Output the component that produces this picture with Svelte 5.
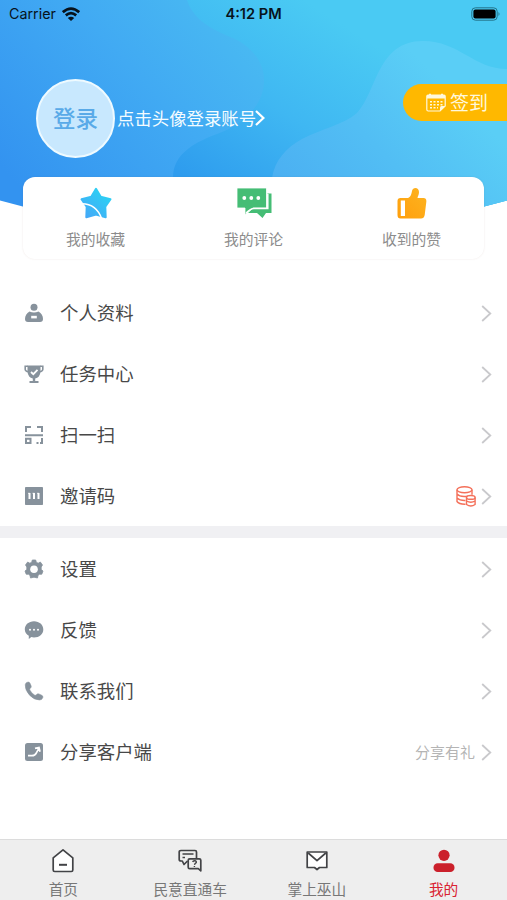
<script>
  const stats = [
    { id: 'star', label: '我的收藏' },
    { id: 'comment', label: '我的评论' },
    { id: 'like', label: '收到的赞' },
  ];

  const groups = [
    [
      { id: 'profile', label: '个人资料' },
      { id: 'task', label: '任务中心' },
      { id: 'scan', label: '扫一扫' },
      { id: 'invite', label: '邀请码', coins: true },
    ],
    [
      { id: 'settings', label: '设置' },
      { id: 'feedback', label: '反馈' },
      { id: 'contact', label: '联系我们' },
      { id: 'share', label: '分享客户端', note: '分享有礼' },
    ],
  ];

  const tabs = [
    { id: 'home', label: '首页' },
    { id: 'opinion', label: '民意直通车' },
    { id: 'wushan', label: '掌上巫山' },
    { id: 'mine', label: '我的' },
  ];

  let activeTab = $state('mine');
</script>

<div class="page">
  <header class="header">
    <svg class="header-bg" width="507" height="240" viewBox="0 0 507 240">
      <defs>
        <linearGradient id="sky" gradientUnits="userSpaceOnUse" x1="50" y1="220" x2="290" y2="0">
          <stop offset="0" stop-color="#3393f0" />
          <stop offset="0.5" stop-color="#41aaf3" />
          <stop offset="1" stop-color="#4dc1f1" />
        </linearGradient>
        <linearGradient id="deep" gradientUnits="userSpaceOnUse" x1="205" y1="190" x2="320" y2="10">
          <stop offset="0" stop-color="#2e9cee" />
          <stop offset="0.5" stop-color="#3fb7f2" />
          <stop offset="1" stop-color="#4acaf3" />
        </linearGradient>
        <linearGradient id="wave" gradientUnits="userSpaceOnUse" x1="290" y1="190" x2="420" y2="60">
          <stop offset="0" stop-color="#4bb0f2" />
          <stop offset="0.5" stop-color="#52bef4" />
          <stop offset="1" stop-color="#5acef6" />
        </linearGradient>
        <clipPath id="header-shape">
          <path d="M0 0H507V200.5Q380 236 253 236T0 200.5Z" />
        </clipPath>
      </defs>
      <g clip-path="url(#header-shape)">
        <path fill="url(#sky)" d="M0 0H507V240H0Z" />
        <path fill="url(#deep)" d="M187 0C194 22 216 31 235 39C253 48 264 63 264 80C264 104 246 122 222 132C195 142 173 153 173 178V240H507V0Z" />
        <path fill="url(#wave)" d="M272 178C275 160 286 148 302 139C321 129 343 125 357 113C377 92 377 41 423 41C459 41 474 69 507 69V240H272Z" />
      </g>
    </svg>

    <div class="status-bar">
      <div class="carrier">
        <span>Carrier</span>
        <svg width="18" height="14" viewBox="0 0 18 14" fill="none" stroke="#07131c" stroke-width="2.7">
          <path d="M.8 5.2Q9-2 17.2 5.2" /><path d="M3.8 8.4Q9 4 14.2 8.4" />
          <path d="M5.8 10.9Q9 8.4 12.2 10.9L9 14Z" fill="#07131c" stroke="none" />
        </svg>
      </div>
      <span class="time">4:12 PM</span>
      <svg class="battery" width="30" height="14" viewBox="0 0 30 14">
        <rect x="0.8" y="0.8" width="25.4" height="12.4" rx="3.6" fill="none" stroke="#23738a" stroke-width="1" />
        <rect x="2.4" y="2.4" width="22.2" height="9.2" rx="2" fill="#000" />
        <path d="M27.5 5Q29.5 7 27.5 9Z" fill="#23738a" />
      </svg>
    </div>

    <div class="account">
      <button class="avatar">登录</button>
      <span class="login-hint">点击头像登录账号</span>
      <svg class="hint-arrow" width="10" height="16" viewBox="0 0 10 16" fill="none" stroke="#fff" stroke-width="2.2"><path d="M1 1L8.4 8L1 15" /></svg>
      <button class="sign-btn">
        <svg width="20" height="19" viewBox="0 0 20 19">
          <path d="M2 2H18Q19.2 2 19.2 3.2V13L14 18H2.2Q.8 18 .8 16.5V3.2Q.8 2 2 2Z" fill="none" stroke="#fff8dc" stroke-width="1.2" />
          <path d="M1 2H3V.8H5V2H15V.8H17V2H19V5.5H1Z" fill="#fff8dc" />
          <path d="M4 8.8H17M4 11.8H17M4 14.8H12" stroke="#fff8dc" stroke-width="1.5" stroke-dasharray="2 1.5" />
          <path d="M14 18V14.5Q14 13 15.5 13H19Z" fill="#fff8dc" />
        </svg>
        <span>签到</span>
      </button>
    </div>

    <div class="stats">
      {#each stats as s}
        <button class="stat">
          {#if s.id === 'star'}
            <svg width="34" height="32" viewBox="0 0 34 32">
              <defs>
                <linearGradient id="star-fill" x1="0" y1="1" x2="0.8" y2="0">
                  <stop offset="0" stop-color="#46a5f8" /><stop offset="1" stop-color="#29d4f3" />
                </linearGradient>
              </defs>
              <path d="M17 1.8L21.6 9.6L31.5 12.3L26.3 19.8L26.7 30.2L17 27.5L7.3 30.2L7.7 19.8L2.5 12.3L12.4 9.6Z" fill="url(#star-fill)" stroke="url(#star-fill)" stroke-width="2" stroke-linejoin="round" />
              <path d="M3 16.8Q17.5 17 22.8 32" fill="none" stroke="#fff" stroke-width="1.5" />
            </svg>
          {:else if s.id === 'comment'}
            <svg width="36" height="32" viewBox="0 0 36 32">
              <path d="M31.5 6.5H35.5V26H30L26.5 31L21 26H12L16 22H31.5Z" fill="#45bd75" />
              <path d="M1 1H30.5V21H17L9 27.5V21H1Z" fill="#45bd75" stroke="#fff" stroke-width="0.8" />
              <path d="M10 26Q14.5 21.5 18 21.5H31.8V7" fill="none" stroke="#fff" stroke-width="1.5" />
              <circle cx="8.3" cy="11" r="1.9" fill="#fff" /><circle cx="15.3" cy="11" r="1.9" fill="#fff" /><circle cx="22.3" cy="11" r="1.9" fill="#fff" />
            </svg>
          {:else}
            <svg width="30" height="32" viewBox="0 0 30 32">
              <defs>
                <linearGradient id="like-fill" x1="0" y1="1" x2="1" y2="0">
                  <stop offset="0" stop-color="#ff9f0d" /><stop offset="1" stop-color="#fdb420" />
                </linearGradient>
              </defs>
              <path d="M3.5 11H11C14 10 14.5 6.5 15 4C15.7-.1 22 .1 22 5C22 8 20.7 9 20.5 11H26.5Q29.8 11.2 29.3 15L27.7 28Q27 31.5 24 31.5H3.5Q.5 31.5 .5 28V14Q.5 11 3.5 11Z" fill="url(#like-fill)" />
              <rect x="3.8" y="13.5" width="4.2" height="15.5" fill="#fff" />
            </svg>
          {/if}
          <span>{s.label}</span>
        </button>
      {/each}
    </div>
  </header>

  {#each groups as group}
    <section class="menu">
      {#each group as item}
        <button class="menu-row">
          <svg class="menu-icon" width="20" height="20" viewBox="0 0 20 20">
            {#if item.id === 'profile'}
              <circle cx="10" cy="4.2" r="3.5" fill="currentColor" />
              <path d="M5.5 8.6Q10 10.6 14.5 8.6Q19 11.5 19 16Q19 19 16 19H4Q1 19 1 16Q1 11.5 5.5 8.6Z" fill="currentColor" />
              <rect x="7.2" y="12.8" width="5.6" height="2.6" fill="#fff" />
            {:else if item.id === 'task'}
              <path d="M3.5 1.5H16.5V8Q15.8 13.5 11.2 14.6V17H14.5V19H5.5V17H8.8V14.6Q4.2 13.5 3.5 8Z" fill="currentColor" />
              <path d="M4 2.3H1.2V5.5Q1.5 7.5 4.5 7.8M16 2.3H18.8V5.5Q18.5 7.5 15.5 7.8" fill="none" stroke="currentColor" stroke-width="1.6" />
              <path d="M7 8L9.3 10.2L13.5 5.8" fill="none" stroke="#fff" stroke-width="1.8" />
            {:else if item.id === 'scan'}
              <path d="M2 7V2H7M13 2H18V7M1 10.3H19M2 13.8H6.5V18H2Z" fill="none" stroke="currentColor" stroke-width="2" />
              <path d="M17 13H19V19H16V17H17ZM12.5 17H14.5V19H12.5Z" fill="currentColor" />
            {:else if item.id === 'invite'}
              <rect x="1" y="1" width="18" height="18" rx="0.8" fill="currentColor" />
              <path d="M5.5 7V13M10 7V13M14.5 7V13" stroke="#fff" stroke-width="2" />
              <path d="M4 7.3H6M8.5 7.3H10.5M13 7.3H15" stroke="#fff" stroke-width="0.8" />
            {:else if item.id === 'settings'}
              <path d="M8.3 1H11.7L12.3 3.3L14.2 4.2L16.3 3L18.5 6L17.2 8V10.5L19 12L17.8 15.2L15.3 15.3L14 16.4L13.5 19L10 18.2L6.5 19L6 16.4L4.7 15.3L2.2 15.2L1 12L2.8 10.5V8L1.5 6L3.7 3L5.8 4.2L7.7 3.3Z" fill="currentColor" stroke="currentColor" stroke-width="0.8" stroke-linejoin="round" />
              <circle cx="10" cy="10.2" r="3.8" fill="#fff" />
            {:else if item.id === 'feedback'}
              <path d="M10 1.2C15.3 1.2 19.3 4.8 19.3 9.4S15.3 17.4 10 17.4Q8.5 17.4 7.3 17L4.8 19V15.7Q.8 13.5 .8 9.3C.8 4.8 4.7 1.2 10 1.2Z" fill="currentColor" />
              <circle cx="6" cy="9.8" r="1" fill="#fff" /><circle cx="10" cy="9.8" r="1" fill="#fff" /><circle cx="14" cy="9.8" r="1" fill="#fff" />
            {:else if item.id === 'contact'}
              <path d="M1.2 3.8Q1.4 1.4 4 1Q5.3.8 6 2.2L7.2 5Q7.7 6.2 6.3 7.2Q5.2 8 6 9.2Q7.8 12.6 10.8 14.2Q11.8 14.6 12.6 13.5Q13.5 12.3 14.9 12.9L17.8 14.3Q19.5 15.1 18.8 16.7Q18 19 15.5 19Q10.5 19 5.8 14.4Q1 9.5 1.2 3.8Z" fill="currentColor" stroke="currentColor" stroke-width="0.5" />
            {:else}
              <rect x="1" y="1" width="18" height="18" rx="2.5" fill="currentColor" />
              <path d="M4 13.7H8Q11 13.7 12.4 10.8L15 6.2M11 6.3L15 5.5L16 9.8" fill="none" stroke="#fff" stroke-width="1.7" />
            {/if}
          </svg>
          <span class="menu-label">{item.label}</span>
          {#if item.note}
            <span class="note">{item.note}</span>
          {/if}
          {#if item.coins}
            <svg class="coins" width="20" height="21" viewBox="0 0 20 21" fill="none" stroke="#f4705a" stroke-width="1.4">
              <ellipse cx="8.5" cy="3.8" rx="7.5" ry="3" />
              <path d="M1 3.8V15.5Q3 18.4 9.5 18.2M16 3.8V8.8M1 8Q4 11.5 12 10.2M1 12Q4 14.8 9.5 14.5" />
              <ellipse cx="14.8" cy="11.4" rx="4.3" ry="1.9" fill="#fff" />
              <path d="M10.5 11.4V18.5Q14.8 21.5 19.1 18.5V11.4M10.5 15Q14.8 17.5 19.1 15" />
            </svg>
          {/if}
          <svg class="chevron" width="11" height="17" viewBox="0 0 11 17" fill="none" stroke="#c9c9cc" stroke-width="1.8"><path d="M1.2 1L9.3 8.5L1.2 16" /></svg>
        </button>
      {/each}
    </section>
  {/each}

  <nav class="tab-bar">
    {#each tabs as tab}
      <button class="tab" class:active={activeTab === tab.id} onclick={() => (activeTab = tab.id)}>
        <svg width="26" height="26" viewBox="0 0 26 26" fill="none" stroke="#424346" stroke-width="1.7" stroke-linejoin="round">
          {#if tab.id === 'home'}
            <path d="M3.2 9.8L13 1.8L22.8 9.8V22Q22.8 23.5 21.3 23.5H4.7Q3.2 23.5 3.2 22Z" fill="#fff" />
            <path d="M9 16.8H17" stroke-width="2" />
          {:else if tab.id === 'opinion'}
            <path d="M10.5 13L7 16.5L5.3 13H4Q2.2 13 2.2 11.5V4Q2.2 2.5 4 2.5H18Q19.5 2.5 19.5 4V10.5M5.5 6H16.5M5.5 9.5H8" />
            <path d="M11.2 12.2Q11.2 10.8 12.7 10.8H22.3Q23.8 10.8 23.8 12.2V22.8L21.3 20.7H12.7Q11.2 20.7 11.2 19.2Z" fill="#eee" />
            <path d="M15.7 14Q16 12.7 17.8 12.8Q19.8 13 19.2 14.7Q17.7 15.6 17.5 16.8M17.4 18V19" stroke-width="1.4" />
          {:else if tab.id === 'wushan'}
            <path d="M3.2 4H22.8V19.5H15.5L13 21.5L10.5 19.5H3.2Z" fill="#fff" />
            <path d="M4.2 5L13 12.7L21.8 5" />
          {:else}
            <circle cx="13" cy="7.3" r="5.6" fill="#cb202b" stroke="none" />
            <rect x="2.5" y="15.3" width="21" height="8.8" rx="4.2" fill="#cb202b" stroke="none" />
          {/if}
        </svg>
        <span>{tab.label}</span>
      </button>
    {/each}
  </nav>
</div>

<style>
  :global(body) {
    margin: 0;
    background: #fff;
  }

  .page {
    width: 507px;
    height: 900px;
    display: flex;
    flex-direction: column;
    overflow: hidden;
    background: #fff;
    font-family: "Noto Sans CJK SC", sans-serif;
  }

  button {
    padding: 0;
    border: 0;
    background: none;
    font: inherit;
    color: inherit;
    cursor: pointer;
  }

  svg {
    display: block;
    flex-shrink: 0;
  }

  /* ─── Header ─── */
  .header {
    position: relative;
    z-index: 0;
    height: 282px;
    flex-shrink: 0;
  }

  .header-bg {
    position: absolute;
    top: 0;
    left: 0;
    z-index: -1;
  }

  .status-bar {
    display: grid;
    grid-template-columns: 1fr auto 1fr;
    align-items: center;
    height: 27px;
    padding: 0 6px 0 9px;
    box-sizing: border-box;
    font-family: Inter, sans-serif;
    font-size: 14.3px;
    color: #07131c;
  }

  .carrier {
    display: flex;
    align-items: center;
    gap: 6px;
  }

  .time {
    margin-right: 3px;
    font-weight: 600;
    font-size: 14.6px;
  }

  .battery {
    justify-self: end;
  }

  .account {
    display: flex;
    align-items: center;
    height: 78px;
    padding: 52px 0 20px 36px;
  }

  .avatar {
    width: 79px;
    height: 79px;
    padding-bottom: 2px;
    box-sizing: border-box;
    border: 2px solid #eefaff;
    border-radius: 50%;
    background: #c8e8fe;
    color: #59aae8;
    font-size: 22.5px;
    font-weight: 500;
  }

  .login-hint {
    margin-left: 2px;
    padding-bottom: 2px;
    color: #f4fcff;
    font-size: 17.4px;
    white-space: nowrap;
  }

  .hint-arrow {
    margin-left: -1px;
  }

  .sign-btn {
    display: flex;
    align-items: center;
    align-self: flex-start;
    gap: 4px;
    width: 104px;
    height: 37px;
    margin: 5px 0 0 auto;
    padding-left: 23px;
    border-radius: 19px 0 0 19px;
    background: #ffb800;
    color: #fff8dc;
    font-size: 19px;
    box-sizing: border-box;
    white-space: nowrap;
  }

  .sign-btn span {
    padding-bottom: 2px;
  }

  .stats {
    display: grid;
    grid-template-columns: repeat(3, 158px);
    justify-content: center;
    height: 82px;
    margin: 0 23px;
    border-radius: 12px;
    background: #fff;
    box-shadow: 0 0 2px rgba(120, 60, 40, 0.12);
  }

  .stat {
    display: flex;
    flex-direction: column;
    align-items: center;
    gap: 9px;
    padding-top: 10px;
    box-sizing: border-box;
    color: #8c8c8c;
    font-size: 14.8px;
    line-height: 22px;
  }

  .stat svg {
    margin-left: 1px;
  }

  /* ─── Menu ─── */
  .menu {
    display: flex;
    flex-direction: column;
  }

  .menu + .menu {
    border-top: 12px solid #f0f0f3;
  }

  .menu-row {
    display: flex;
    align-items: center;
    height: 61px;
    padding: 1px 15px 0 24px;
    box-sizing: border-box;
    color: #484848;
    text-align: left;
  }

  .menu-icon {
    color: #87929c;
  }

  .menu-label {
    flex: 1;
    margin-left: 16px;
    padding-bottom: 3px;
    font-size: 18.4px;
  }

  .note {
    margin-right: 6px;
    padding-bottom: 1px;
    color: #b4b4b4;
    font-size: 15px;
  }

  .coins {
    margin-right: 5px;
  }

  /* ─── Tab bar ─── */
  .tab-bar {
    display: grid;
    grid-template-columns: repeat(4, 1fr);
    height: 61px;
    margin-top: auto;
    box-sizing: border-box;
    border-top: 1px solid #dcdcdc;
    background: #eee;
  }

  .tab {
    display: flex;
    flex-direction: column;
    align-items: center;
    gap: 4px;
    padding-top: 8px;
    color: #777;
    font-size: 14.7px;
    line-height: 22px;
    white-space: nowrap;
  }

  .tab.active {
    color: #d92332;
  }
</style>
